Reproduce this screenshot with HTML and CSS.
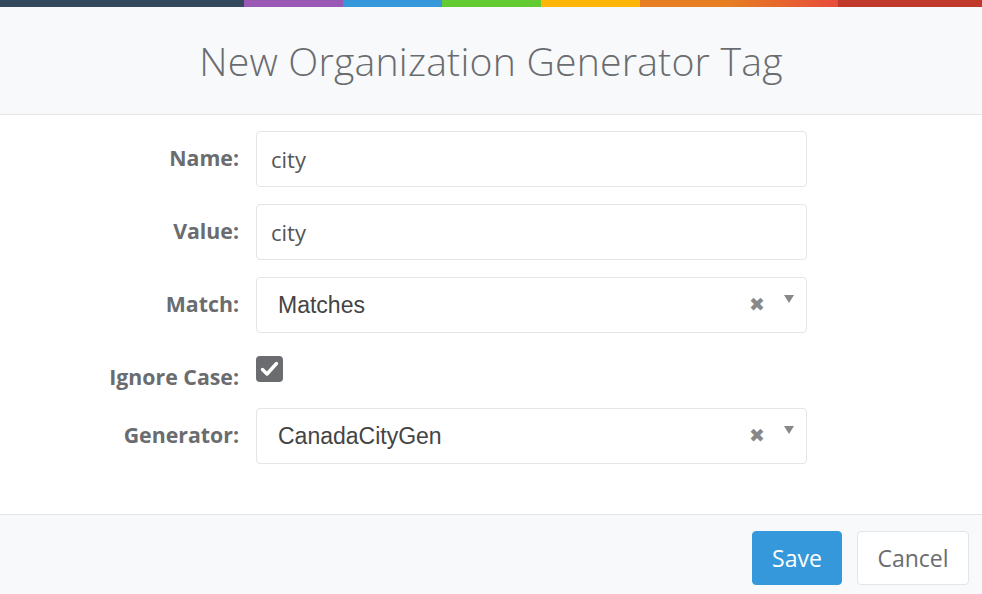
FILE: index.html
```html
<!DOCTYPE html>
<html>
<head>
<meta charset="utf-8">
<link rel="stylesheet" href="styles.css">
</head>
<body>
<div class="color-line">
  <span class="c1"></span><span class="c2"></span><span class="c3"></span><span class="c4"></span><span class="c5"></span><span class="c6"></span><span class="c7"></span>
</div>
<div class="modal-header">
  <h4 class="modal-title">New Organization Generator Tag</h4>
</div>
<div class="modal-body">
  <div class="form-row">
    <label class="control-label">Name:</label>
    <div class="form-control">city</div>
  </div>
  <div class="form-row">
    <label class="control-label">Value:</label>
    <div class="form-control">city</div>
  </div>
  <div class="form-row">
    <label class="control-label">Match:</label>
    <div class="form-control select">
      <span class="select-value">Matches</span>
      <span class="select-clear">✖</span>
      <span class="select-arrow"></span>
    </div>
  </div>
  <div class="form-row check-row">
    <label class="control-label">Ignore Case:</label>
    <div class="check-cell">
      <span class="checkbox">
        <svg width="27" height="26" viewBox="0 0 27 26"><path d="M6.5 13.5 L11 18 L20.5 7.5" fill="none" stroke="#fff" stroke-width="3.4" stroke-linecap="round" stroke-linejoin="round"/></svg>
      </span>
    </div>
  </div>
  <div class="form-row">
    <label class="control-label">Generator:</label>
    <div class="form-control select">
      <span class="select-value">CanadaCityGen</span>
      <span class="select-clear">✖</span>
      <span class="select-arrow"></span>
    </div>
  </div>
</div>
<div class="modal-footer">
  <button class="btn btn-primary">Save</button>
  <button class="btn btn-default">Cancel</button>
</div>
</body>
</html>
```
FILE: styles.css
```css
html, body {
  margin: 0;
  padding: 0;
  background: #ffffff;
  font-family: "Open Sans", "Liberation Sans", sans-serif;
  color: #6a6c6f;
}
.color-line {
  display: flex;
  height: 7px;
}
.color-line span { display: block; height: 100%; }
.c1 { width: 244px; background: #34495e; }
.c2 { width: 99px; background: #9b59b6; }
.c3 { width: 99px; background: #3498db; }
.c4 { width: 99px; background: #62cb31; }
.c5 { width: 99px; background: #ffb606; }
.c6 { width: 198px; background: linear-gradient(to right, #e67e22 0%, #e67e22 45%, #e74c3c 100%); }
.c7 { flex: 1; background: #c0392b; }

.modal-header {
  background: #f7f9fa;
  border-bottom: 1px solid #e4e5e7;
  height: 107px;
  display: flex;
  align-items: center;
  justify-content: center;
}
.modal-title {
  margin: 0;
  font-weight: 300;
  font-size: 39.2px;
  color: #6a6c6f;
  letter-spacing: 0.2px;
}

.modal-body {
  padding: 16px 0 50px 0;
  display: flex;
  flex-direction: column;
  gap: 17px;
}
.form-row {
  display: grid;
  grid-template-columns: 256px 551px;
  align-items: start;
}
.control-label {
  text-align: right;
  padding-right: 17px;
  font-weight: 700;
  font-size: 21.3px;
  line-height: 28px;
  padding-top: 13px;
  color: #6a6c6f;
}
.form-control {
  box-sizing: border-box;
  height: 56px;
  border: 1px solid #e4e5e7;
  border-radius: 4px;
  padding: 0 14px;
  display: flex;
  align-items: center;
  font-size: 22px;
  color: #555555;
  background: #fff;
}
.select {
  position: relative;
  font-family: "Liberation Sans", Arial, sans-serif;
  font-size: 23px;
  color: #444;
  padding-left: 21px;
}
.select-value { flex: 1; }
.select-clear {
  font-family: "DejaVu Sans", sans-serif;
  font-size: 19px;
  font-weight: bold;
  color: #888;
  margin-right: 27px;
  margin-top: -3px;
}
.select-arrow {
  position: absolute;
  right: 12px;
  top: 17px;
  width: 0;
  height: 0;
  border-left: 5px solid transparent;
  border-right: 5px solid transparent;
  border-top: 8px solid #888;
}
.check-row { min-height: 40px; }
.check-cell { padding-top: 6px; }
.checkbox {
  display: block;
  width: 27px;
  height: 26px;
  background: #6a6c6f;
  border-radius: 4px;
}
.checkbox svg { display: block; }

.modal-footer {
  background: #f7f9fa;
  border-top: 1px solid #e4e5e7;
  padding: 16px 13px 0 0;
  height: 80px;
  display: flex;
  justify-content: flex-end;
  align-items: flex-start;
  gap: 15px;
}
.btn {
  height: 54px;
  border-radius: 4px;
  font-family: "Open Sans", sans-serif;
  font-size: 23px;
  padding: 0;
  cursor: pointer;
}
.btn-primary {
  width: 90px;
  background: #3498db;
  border: 1px solid #3498db;
  color: #fff;
}
.btn-default {
  width: 112px;
  background: #fff;
  border: 1px solid #e4e5e7;
  color: #6a6c6f;
}
```
